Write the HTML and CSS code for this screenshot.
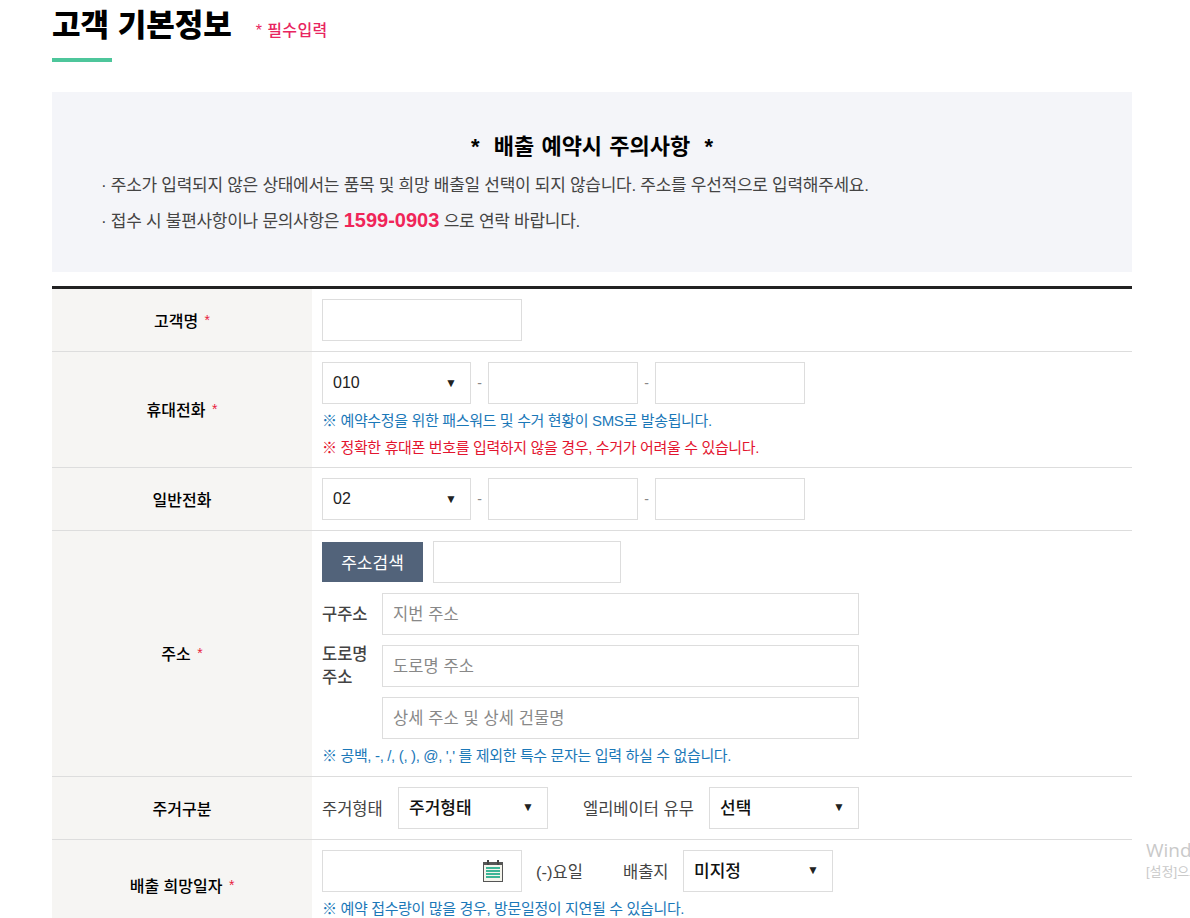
FILE: index.html
```html
<!DOCTYPE html>
<html lang="ko">
<head>
<meta charset="utf-8">
<title>고객 기본정보</title>
<link rel="stylesheet" href="styles.css">
</head>
<body>
<main class="page">
  <header class="head">
    <h2 class="title">고객 기본정보</h2>
    <span class="required">* 필수입력</span>
  </header>
  <div class="bar"></div>
  <section class="notice">
    <h3 class="notice-title">*&nbsp; 배출 예약시 주의사항 &nbsp;*</h3>
    <p class="notice-line">· 주소가 입력되지 않은 상태에서는 품목 및 희망 배출일 선택이 되지 않습니다. 주소를 우선적으로 입력해주세요.</p>
    <p class="notice-line second">· 접수 시 불편사항이나 문의사항은 <strong class="phone">1599-0903</strong> 으로 연락 바랍니다.</p>
  </section>
  <div class="form">
    <div class="row">
      <div class="label">고객명 <em>*</em></div>
      <div class="cell"><div class="box w200"></div></div>
    </div>
    <div class="row">
      <div class="label">휴대전화 <em>*</em></div>
      <div class="cell">
        <div class="line">
          <div class="box sel w149"><span>010</span><i class="arrow">▼</i></div>
          <span class="dash">-</span><div class="box w150"></div>
          <span class="dash">-</span><div class="box w150"></div>
        </div>
        <p class="hint blue h1">※ 예약수정을 위한 패스워드 및 수거 현황이 SMS로 발송됩니다.</p>
        <p class="hint red h2">※ 정확한 휴대폰 번호를 입력하지 않을 경우, 수거가 어려울 수 있습니다.</p>
      </div>
    </div>
    <div class="row">
      <div class="label">일반전화</div>
      <div class="cell">
        <div class="line">
          <div class="box sel w149"><span>02</span><i class="arrow">▼</i></div>
          <span class="dash">-</span><div class="box w150"></div>
          <span class="dash">-</span><div class="box w150"></div>
        </div>
      </div>
    </div>
    <div class="row">
      <div class="label">주소 <em>*</em></div>
      <div class="cell">
        <div class="line search">
          <button class="btn" type="button">주소검색</button>
          <div class="box w188"></div>
        </div>
        <div class="addr-row">
          <span class="addr-label">구주소</span>
          <div class="box field">지번 주소</div>
        </div>
        <div class="addr-row">
          <span class="addr-label">도로명<br>주소</span>
          <div class="box field">도로명 주소</div>
        </div>
        <div class="addr-row">
          <span class="addr-label"></span>
          <div class="box field">상세 주소 및 상세 건물명</div>
        </div>
        <p class="hint blue h3">※ 공백, -, /, (, ), @, ',' 를 제외한 특수 문자는 입력 하실 수 없습니다.</p>
      </div>
    </div>
    <div class="row">
      <div class="label">주거구분</div>
      <div class="cell">
        <div class="line">
          <span class="txt t1">주거형태</span>
          <div class="box sel w150 dark"><span>주거형태</span><i class="arrow">▼</i></div>
          <span class="txt t2">엘리베이터 유무</span>
          <div class="box sel w150 dark"><span>선택</span><i class="arrow">▼</i></div>
        </div>
      </div>
    </div>
    <div class="row last">
      <div class="label">배출 희망일자 <em>*</em></div>
      <div class="cell">
        <div class="line">
          <div class="box w200 date">
            <svg class="cal" width="22" height="24" viewBox="0 0 22 24">
              <rect x="1.5" y="3.5" width="19" height="19" fill="#f4f4ec" stroke="#555"/>
              <rect x="1" y="3" width="20" height="3" fill="#555"/>
              <rect x="5" y="1" width="2" height="5" fill="#444"/>
              <rect x="15" y="1" width="2" height="5" fill="#444"/>
              <rect x="4" y="8" width="14" height="2" fill="#3cb596"/>
              <rect x="4" y="11" width="14" height="2" fill="#3cb596"/>
              <rect x="4" y="14" width="14" height="2" fill="#3cb596"/>
              <rect x="4" y="17" width="14" height="2" fill="#3cb596"/>
            </svg>
          </div>
          <span class="txt t3">(-)요일</span>
          <span class="txt t4">배출지</span>
          <div class="box sel w150 dark"><span>미지정</span><i class="arrow">▼</i></div>
        </div>
        <p class="hint blue h4">※ 예약 접수량이 많을 경우, 방문일정이 지연될 수 있습니다.</p>
      </div>
    </div>
  </div>
</main>
<aside class="watermark">
  <div class="wm-a">Windows 정품 인증</div>
  <div class="wm-b">[설정]으로 이동하여 Windows를 정품 인증합니다.</div>
</aside>
</body>
</html>
```
FILE: styles.css
```css
* { box-sizing: border-box; }
html, body { height: 918px; overflow: hidden; }
body {
  margin: 0;
  background: #fff;
  color: #000;
  font-family: "Liberation Sans", "Noto Sans CJK KR", sans-serif;
  font-size: 15px;
}
.page { width: 1080px; margin-left: 52px; }
.head { display: flex; align-items: flex-end; height: 46px; padding-top: 4px; }
.title { margin: 0; font-size: 31px; font-weight: 900; line-height: 40px; }
.required { margin-left: 24px; margin-bottom: 5px; color: #e8255f; font-size: 16px; font-weight: 500; line-height: 20px; letter-spacing: 0.4px; }
.bar { width: 60px; height: 4px; margin-top: 12px; background: #4dc69b; }
.notice { height: 180px; margin-top: 30px; padding: 41px 49px 0; background: #f4f5f9; }
.notice-title { margin: 0 0 7px; text-align: center; font-size: 22px; line-height: 28px; font-weight: 700; word-spacing: 1px; }
.notice-line { margin: 0; height: 35px; line-height: 35px; color: #444; font-size: 17px; letter-spacing: -0.28px; }
.notice-line.second { height: 34px; line-height: 34px; }
.phone { color: #f02559; font-size: 20px; letter-spacing: 0; }
.form { margin-top: 14px; border-top: 3px solid #222; }
.row { display: flex; border-bottom: 1px solid #ddd; }
.row.last { border-bottom: 0; }
.label {
  flex: 0 0 260px;
  display: flex;
  align-items: center;
  justify-content: center;
  gap: 2px;
  padding-bottom: 1px;
  background: #f6f5f3;
  font-size: 16px;
  font-weight: 500;
  white-space: pre;
}
.label em { color: #e8203c; font-size: 14px; font-style: normal; font-weight: 400; }
.cell { flex: 1; padding: 10px; min-height: 62px; }
.line { display: flex; align-items: center; }
.box { height: 42px; border: 1px solid #ddd; background: #fff; flex: none; }
.w200 { width: 200px; }
.w149 { width: 149px; }
.w150 { width: 150px; }
.w188 { width: 188px; }
.sel { display: flex; align-items: center; justify-content: space-between; padding: 0 13px 0 10px; font-size: 16px; color: #222; }
.sel.dark { font-size: 17px; font-weight: 500; color: #111; padding-bottom: 3px; }
.arrow { font-style: normal; font-size: 12px; color: #222; }
.dash { width: 17px; text-align: center; color: #888; font-size: 14px; }
.hint { margin: 0; font-size: 15px; line-height: 22px; letter-spacing: -0.35px; }
.blue { color: #1b78b8; }
.red { color: #e3152f; }
.h1 { margin-top: 6px; }
.h2 { margin-top: 5px; margin-bottom: -2px; }
.h3 { margin-top: 6px; margin-bottom: -1px; }
.h4 { margin-top: 6px; }
.search { gap: 10px; }
.btn { width: 101px; height: 40px; border: 0; background: #52637a; color: #fff; font: inherit; font-size: 17px; padding: 0 0 2px; }
.addr-row { display: flex; align-items: center; height: 42px; margin-top: 10px; }
.addr-label { width: 60px; flex: none; font-size: 16.5px; line-height: 23px; font-weight: 500; color: #444; }
.field { width: 477px; line-height: 40px; padding-left: 10px; color: #888; font-size: 16.5px; letter-spacing: 0.1px; }
.txt { color: #444; font-size: 16.5px; }
.t1 { width: 76px; }
.t2 { margin-left: 35px; width: 126px; }
.t3 { margin-left: 14px; width: 87px; }
.t4 { width: 60px; }
.date { position: relative; }
.cal { position: absolute; right: 17px; top: 8px; }
.watermark { position: absolute; left: 1146px; top: 838px; width: 400px; color: #c9c9c9; white-space: nowrap; }
.wm-a { font-family: "Open Sans", sans-serif; font-size: 19px; line-height: 24px; }
.wm-b { font-size: 13px; line-height: 20px; }
```
